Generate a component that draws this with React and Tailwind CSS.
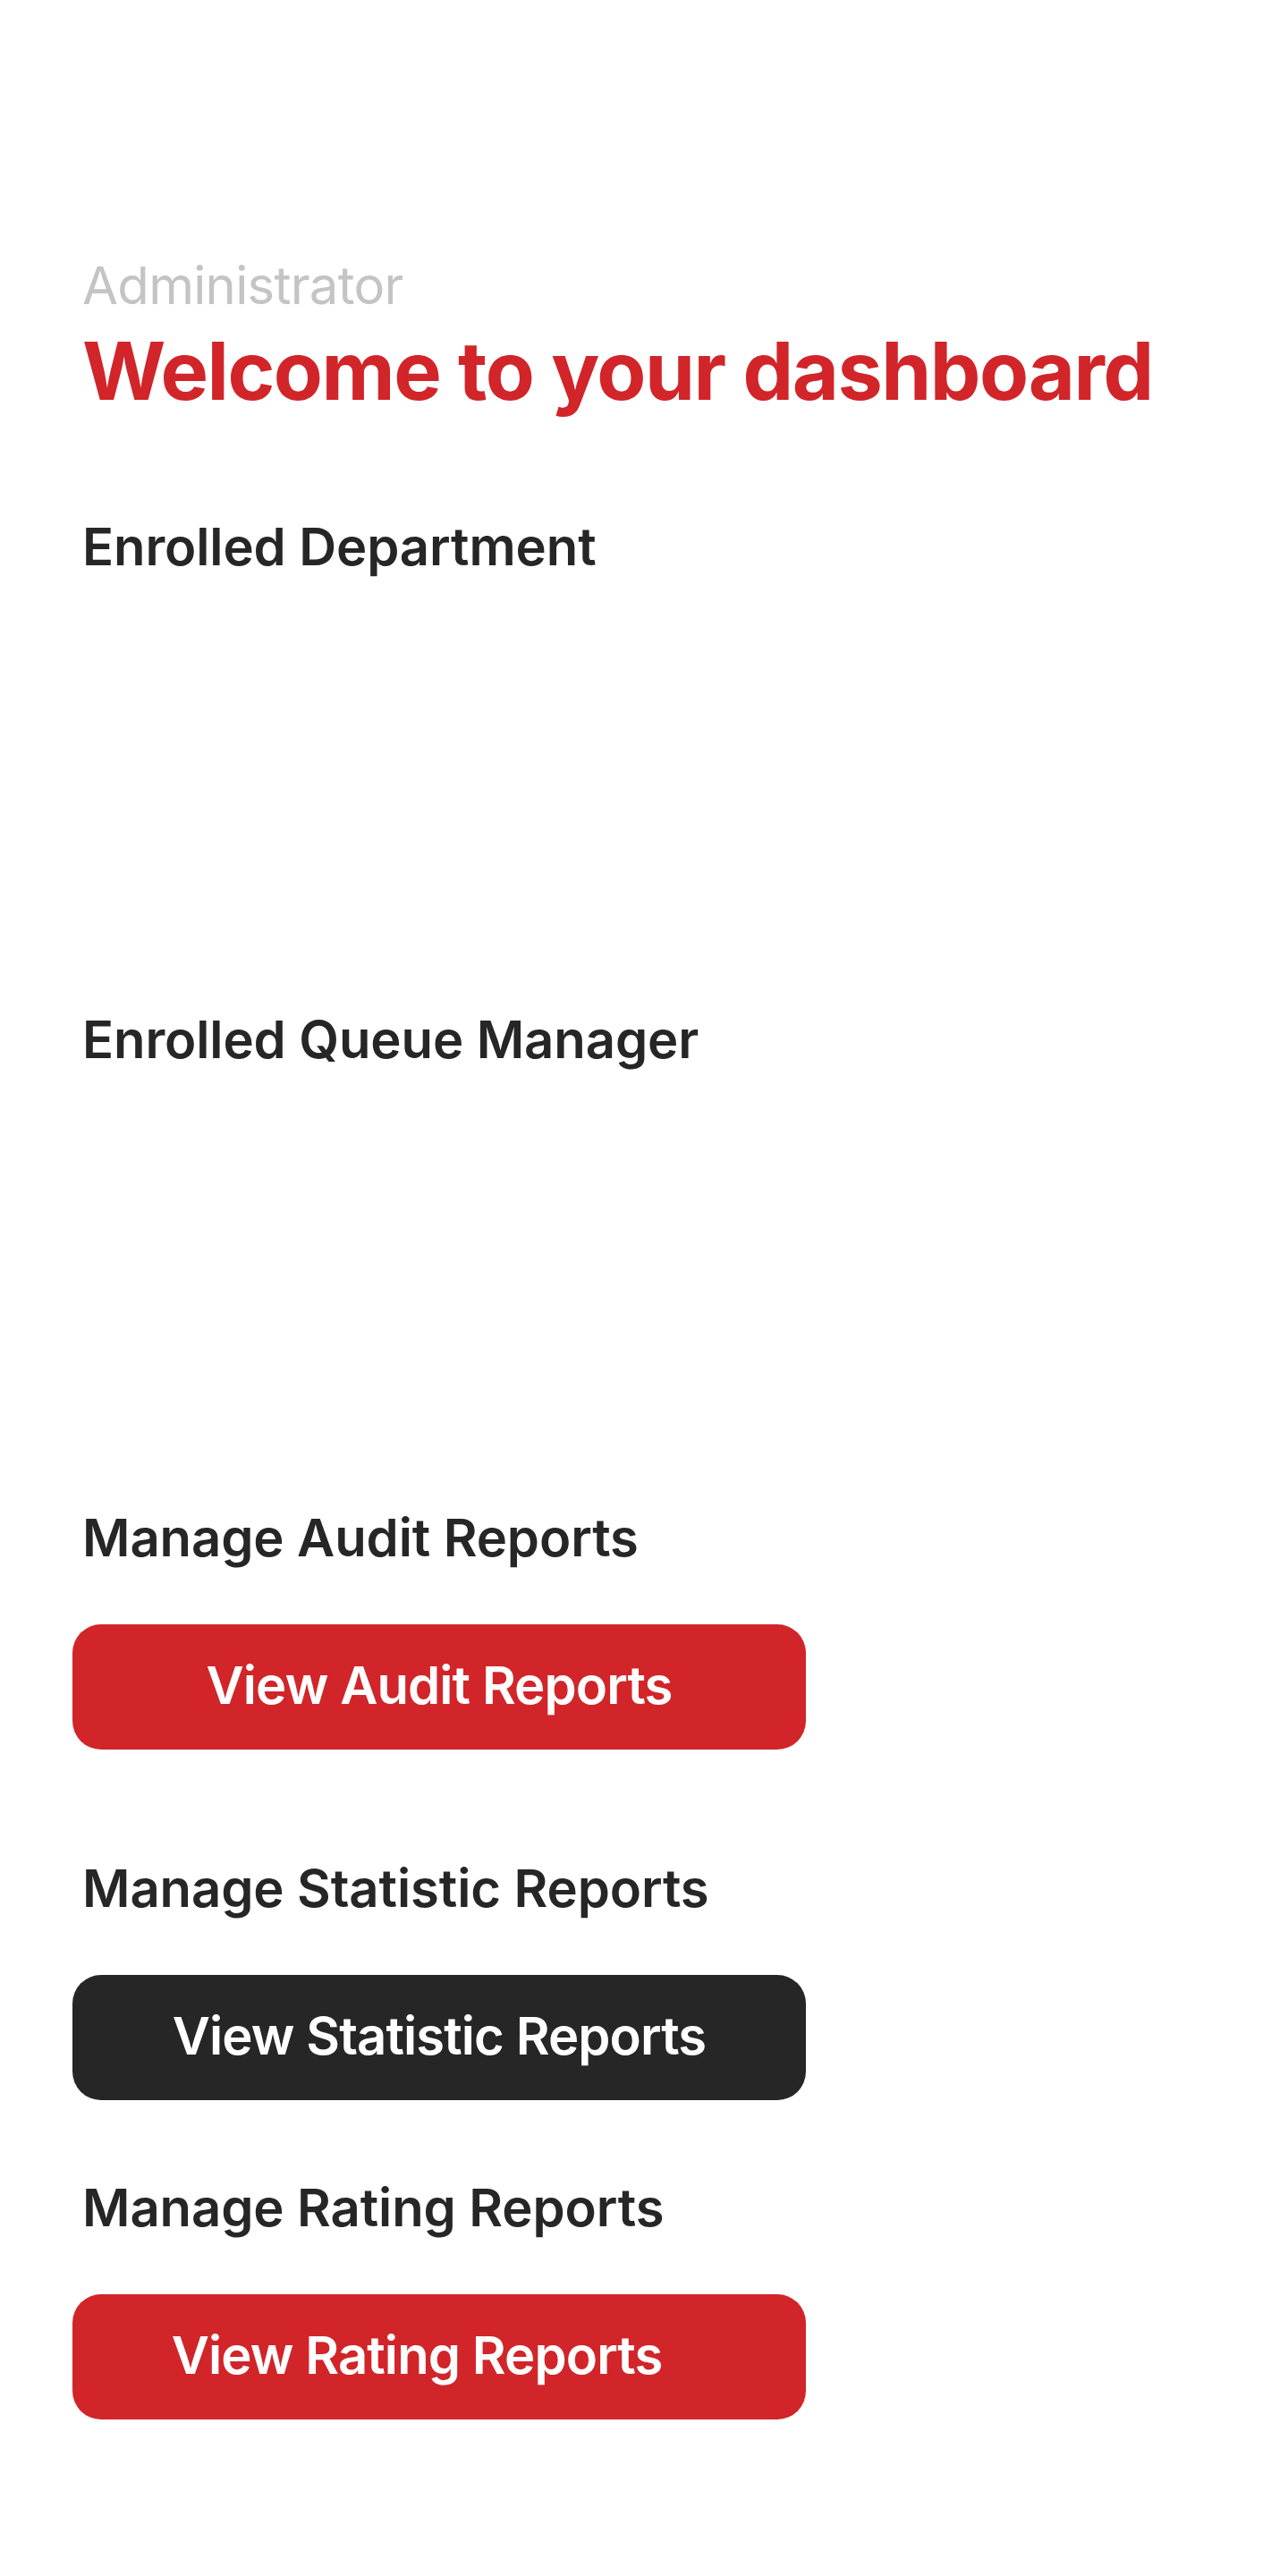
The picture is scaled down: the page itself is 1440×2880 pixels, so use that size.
export default function App() {
  const font = { fontFamily: "Inter, 'Noto Sans', sans-serif" };

  return (
    <div className="min-h-[2880px] bg-white" style={font}>
      <div className="pl-[92px] pr-[40px]">
        <p className="pt-[290px] text-[58px] leading-[58px] text-[#c4c4c4] tracking-[-0.7px]">
          Administrator
        </p>
        <h1 className="mt-[22px] text-[90px] leading-[90px] font-bold text-[#d1252a] tracking-[-1.5px]">
          Welcome to your dashboard
        </h1>

        <h2 className="mt-[122px] text-[58px] leading-[58px] font-semibold text-[#262626] tracking-[-0.1px]">
          Enrolled Department
        </h2>
        <div className="h-[493px]"></div>

        <h2 className="text-[58px] leading-[58px] font-semibold text-[#262626] tracking-[-0.1px]">
          Enrolled Queue Manager
        </h2>
        <div className="h-[499px]"></div>

        <h2 className="text-[58px] leading-[58px] font-semibold text-[#262626] tracking-[-0.1px]">
          Manage Audit Reports
        </h2>
      </div>

      <div className="pl-[81px]">
        <button className="mt-[68px] flex h-[140px] w-[820px] items-center justify-center rounded-[32px] bg-[#d1252a] pb-[5px] text-[58px] leading-[58px] font-semibold tracking-[-0.9px] text-white">
          View Audit Reports
        </button>
      </div>

      <div className="pl-[92px]">
        <h2 className="mt-[126px] text-[58px] leading-[58px] font-semibold text-[#262626] tracking-[-0.1px]">
          Manage Statistic Reports
        </h2>
      </div>
      <div className="pl-[81px]">
        <button className="mt-[68px] flex h-[140px] w-[820px] items-center justify-center rounded-[32px] bg-[#262626] pb-[5px] text-[58px] leading-[58px] font-semibold tracking-[-0.9px] text-white">
          View Statistic Reports
        </button>
      </div>

      <div className="pl-[92px]">
        <h2 className="mt-[91px] text-[58px] leading-[58px] font-semibold text-[#262626] tracking-[-0.1px]">
          Manage Rating Reports
        </h2>
      </div>
      <div className="pl-[81px]">
        <button className="mt-[68px] flex h-[140px] w-[820px] items-center justify-center rounded-[32px] bg-[#d1252a] pb-[5px] pr-[50px] text-[58px] leading-[58px] font-semibold tracking-[-0.9px] text-white">
          View Rating Reports
        </button>
      </div>
    </div>
  );
}
